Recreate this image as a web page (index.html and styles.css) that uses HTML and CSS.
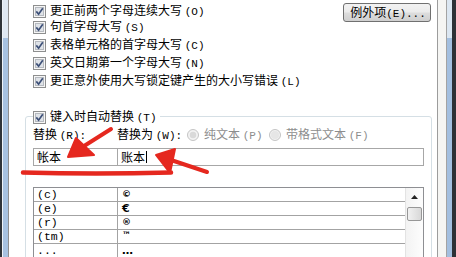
FILE: index.html
```html
<!DOCTYPE html>
<html lang="zh-CN">
<head>
<meta charset="utf-8">
<title>自动更正</title>
<link rel="stylesheet" href="styles.css">
</head>
<body>
<div class="window">
  <div class="frame-left"><div class="fl-dark"></div><div class="fl-blue"></div></div>
  <main class="dialog">
    <section class="options">
      <div class="opt opt-first">
        <svg class="cb" width="13" height="13" viewBox="0 0 13 13"><rect x="0.5" y="0.5" width="12" height="12" fill="#f6f6f6" stroke="#8e8f8f"/><rect x="2.5" y="2.5" width="8" height="8" fill="#dfe3e8" stroke="#b6bac0"/><path d="M3.3 6.4 L5.6 9.2 L9.8 3.2" fill="none" stroke="#3d5078" stroke-width="1.7"/></svg>
        <span class="lbl">更正前两个字母连续大写 <span class="key">(O)</span></span>
        <button class="btn">例外项<span class="key">(E)...</span></button>
      </div>
      <div class="opt opt-second">
        <svg class="cb" width="13" height="13" viewBox="0 0 13 13"><rect x="0.5" y="0.5" width="12" height="12" fill="#f6f6f6" stroke="#8e8f8f"/><rect x="2.5" y="2.5" width="8" height="8" fill="#dfe3e8" stroke="#b6bac0"/><path d="M3.3 6.4 L5.6 9.2 L9.8 3.2" fill="none" stroke="#3d5078" stroke-width="1.7"/></svg>
        <span class="lbl">句首字母大写 <span class="key">(S)</span></span>
      </div>
      <div class="opt">
        <svg class="cb" width="13" height="13" viewBox="0 0 13 13"><rect x="0.5" y="0.5" width="12" height="12" fill="#f6f6f6" stroke="#8e8f8f"/><rect x="2.5" y="2.5" width="8" height="8" fill="#dfe3e8" stroke="#b6bac0"/><path d="M3.3 6.4 L5.6 9.2 L9.8 3.2" fill="none" stroke="#3d5078" stroke-width="1.7"/></svg>
        <span class="lbl">表格单元格的首字母大写 <span class="key">(C)</span></span>
      </div>
      <div class="opt">
        <svg class="cb" width="13" height="13" viewBox="0 0 13 13"><rect x="0.5" y="0.5" width="12" height="12" fill="#f6f6f6" stroke="#8e8f8f"/><rect x="2.5" y="2.5" width="8" height="8" fill="#dfe3e8" stroke="#b6bac0"/><path d="M3.3 6.4 L5.6 9.2 L9.8 3.2" fill="none" stroke="#3d5078" stroke-width="1.7"/></svg>
        <span class="lbl">英文日期第一个字母大写 <span class="key">(N)</span></span>
      </div>
      <div class="opt">
        <svg class="cb" width="13" height="13" viewBox="0 0 13 13"><rect x="0.5" y="0.5" width="12" height="12" fill="#f6f6f6" stroke="#8e8f8f"/><rect x="2.5" y="2.5" width="8" height="8" fill="#dfe3e8" stroke="#b6bac0"/><path d="M3.3 6.4 L5.6 9.2 L9.8 3.2" fill="none" stroke="#3d5078" stroke-width="1.7"/></svg>
        <span class="lbl">更正意外使用大写锁定键产生的大小写错误 <span class="key">(L)</span></span>
      </div>
    </section>

    <section class="group">
      <div class="legend">
        <svg class="cb" width="13" height="13" viewBox="0 0 13 13"><rect x="0.5" y="0.5" width="12" height="12" fill="#f6f6f6" stroke="#8e8f8f"/><rect x="2.5" y="2.5" width="8" height="8" fill="#dfe3e8" stroke="#b6bac0"/><path d="M3.3 6.4 L5.6 9.2 L9.8 3.2" fill="none" stroke="#3d5078" stroke-width="1.7"/></svg>
        <span class="lbl">键入时自动替换 <span class="key">(T)</span></span>
      </div>
      <div class="labels">
        <span class="lbl-from">替换 <span class="key">(R):</span></span>
        <span class="lbl-to">替换为 <span class="key">(W):</span></span>
        <span class="radio radio-plain">
          <svg width="12" height="12" viewBox="0 0 12 12"><circle cx="6" cy="6" r="5.5" fill="#f2f2f2" stroke="#c4c4c4"/><circle cx="6" cy="6" r="3.2" fill="#d9d9d9"/></svg>
          <span class="dis">纯文本 <span class="key">(P)</span></span>
        </span>
        <span class="radio">
          <svg width="12" height="12" viewBox="0 0 12 12"><circle cx="6" cy="6" r="5.5" fill="#f2f2f2" stroke="#c4c4c4"/><circle cx="6" cy="6" r="4" fill="#e6e6e6"/></svg>
          <span class="dis">带格式文本 <span class="key">(F)</span></span>
        </span>
      </div>
      <div class="inputs">
        <div class="tb tb-from">帐本</div>
        <div class="tb tb-to">账本<span class="caret"></span></div>
      </div>
      <div class="list">
        <div class="rows">
          <div class="row"><span class="c1">(c)</span><span class="c2 sym-small">©</span></div>
          <div class="row"><span class="c1">(e)</span><span class="c2">€</span></div>
          <div class="row"><span class="c1">(r)</span><span class="c2 sym-small">®</span></div>
          <div class="row"><span class="c1">(tm)</span><span class="c2 sym-tm">™</span></div>
          <div class="row"><span class="c1">...</span><span class="c2">…</span></div>
        </div>
        <div class="sb">
          <div class="sb-up"><svg width="7" height="4" viewBox="0 0 7 4"><path d="M0 4 L3.5 0 L7 4 Z" fill="#222"/></svg></div>
          <div class="sb-thumb"></div>
        </div>
      </div>
    </section>
  </main>
  <div class="frame-right"><div class="fr-face"></div><div class="fr-line"></div><div class="fr-blue"></div><div class="fr-dark"></div></div>

  <svg class="annot" width="456" height="257" viewBox="0 0 456 257">
    <g stroke="#e5281f" fill="#e5281f" stroke-linecap="round" stroke-linejoin="round">
      <path d="M111 129 L73 153" stroke-width="4" fill="none"/>
      <polygon points="68,157 76,138 94,155" stroke-width="2"/>
      <path d="M207 172 L162 157" stroke-width="4" fill="none"/>
      <polygon points="156,155 175,149 170,173" stroke-width="2"/>
      <path d="M23 172.5 Q 95 174.5 171 172.5" stroke-width="4.5" fill="none"/>
    </g>
  </svg>
</div>
</body>
</html>
```

FILE: styles.css
```css
* {
  box-sizing: border-box;
  margin: 0;
  padding: 0;
}

html, body {
  width: 456px;
  height: 257px;
  overflow: hidden;
}

body {
  font-family: "Noto Sans CJK SC", "Noto Sans", sans-serif;
  font-size: 12px;
  color: #000;
  background: #fff;
}

.window {
  position: relative;
  display: flex;
  width: 456px;
  height: 257px;
}

/* window frame */
.frame-left {
  display: flex;
  flex: none;
  width: 8px;
}

.fl-dark {
  width: 2px;
  background: #2f3439;
}

.fl-blue {
  width: 6px;
  border-left: 1px solid #eef3f8;
  background: linear-gradient(#dfe8f2 0 38px, #a7c2e1 38px);
}

.frame-right {
  display: flex;
  flex: none;
  width: 18px;
}

.fr-face {
  width: 8px;
  background: #f5f5f3;
}

.fr-line {
  width: 1px;
  background: #a3a3a3;
}

.fr-blue {
  width: 5px;
  background: linear-gradient(#dbe6f1 0 38px, #a3bfe0 38px);
}

.fr-dark {
  width: 4px;
  background: #2d3136;
}

.dialog {
  flex: 1;
  width: 430px;
  border-left: 1px solid #8f8f8f;
  border-right: 1px solid #9c9c9c;
  background: #fff;
  overflow: hidden;
}

/* option checkboxes */
.options {
  display: flex;
  flex-direction: column;
  gap: 4px;
  padding: 4px 6px 0 24px;
}

.opt {
  display: flex;
  align-items: center;
  height: 14px;
  line-height: 14px;
  white-space: nowrap;
}

.opt-second {
  margin-top: -2px;
}

.cb {
  flex: none;
  display: block;
}

.lbl {
  margin-left: 4px;
}

.key {
  font-family: "Liberation Mono", monospace;
  font-size: 11px;
}

.btn {
  align-self: flex-start;
  margin: -1px 0 0 auto;
  width: 88px;
  height: 19px;
  border: 1px solid #707070;
  border-radius: 3px;
  background: linear-gradient(#f2f2f2 0%, #ebebeb 48%, #dddddd 52%, #cfcfcf 100%);
  font-family: "Noto Sans CJK SC", sans-serif;
  font-size: 12px;
  line-height: 16px;
  color: #000;
  padding-left: 2px;
}

/* group box */
.group {
  margin: 28px 5px 0 16px;
  height: 160px;
  border: 1px solid #d5dfe5;
  border-radius: 3px;
  padding: 0 7px;
}

.legend {
  display: flex;
  align-items: center;
  width: fit-content;
  height: 14px;
  line-height: 14px;
  margin-top: -7px;
  padding-right: 3px;
  background: #fff;
  white-space: nowrap;
}

.labels {
  display: flex;
  align-items: center;
  height: 14px;
  line-height: 14px;
  margin-top: 4px;
  white-space: nowrap;
}

.lbl-from {
  width: 84px;
}

.lbl-to {
  width: 70px;
}

.radio {
  display: flex;
  align-items: center;
  gap: 5px;
}

.radio svg {
  display: block;
}

.radio-plain {
  width: 82px;
}

.dis {
  color: #8d8d8d;
}

.inputs {
  display: flex;
  height: 18px;
  margin-top: 6px;
}

.tb {
  height: 18px;
  border: 1px solid #a7a7a7;
  padding-left: 3px;
  line-height: 16px;
  display: flex;
  align-items: center;
}

.tb-from {
  width: 85px;
}

.tb-to {
  flex: 1;
  margin-left: -1px;
}

.caret {
  display: inline-block;
  width: 1px;
  height: 12px;
  margin-left: 1px;
  background: #000;
}

/* list */
.list {
  display: flex;
  height: 90px;
  margin-top: 21px;
  border: 1px solid #8e8f93;
}

.rows {
  flex: 1;
}

.row {
  display: flex;
  height: 14px;
  border-bottom: 1px solid #a3a3a3;
  line-height: 13px;
}

.c1 {
  width: 84px;
  padding-left: 3px;
  border-right: 1px solid #a3a3a3;
  font-family: "Liberation Mono", monospace;
  font-size: 11.5px;
}

.c2 {
  padding-left: 4px;
  font-family: "DejaVu Sans", sans-serif;
  font-size: 11px;
  font-weight: bold;
}

.sym-small {
  font-size: 9px;
}

.sym-tm {
  font-size: 9px;
  line-height: 10px;
}

.sb {
  flex: none;
  width: 18px;
  border-left: 1px solid #e3e3e3;
  background: linear-gradient(90deg, #f3f3f3, #fdfdfd);
  display: flex;
  flex-direction: column;
  align-items: center;
}

.sb-up {
  height: 17px;
  width: 100%;
  display: flex;
  align-items: center;
  justify-content: center;
}

.sb-up svg {
  display: block;
}

.sb-thumb {
  margin-top: 2px;
  width: 15px;
  height: 14px;
  border: 1px solid #979797;
  border-radius: 2px;
  background: linear-gradient(90deg, #f1f1f1, #d8d8d8);
}

/* red annotation overlay */
.annot {
  position: absolute;
  left: 0;
  top: 0;
  pointer-events: none;
}
```
